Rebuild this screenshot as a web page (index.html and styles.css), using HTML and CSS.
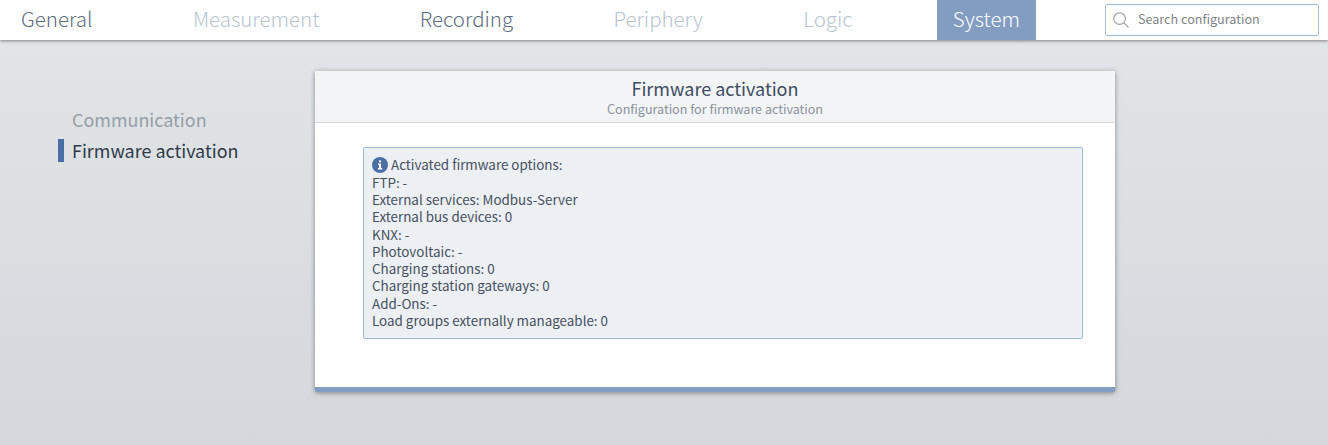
FILE: index.html
```html
<!DOCTYPE html>
<html lang="en">
<head>
    <meta charset="UTF-8">
    <meta name="viewport" content="width=device-width, initial-scale=1.0">
    <title>Firmware activation</title>
    <link rel="stylesheet" href="styles.css">
</head>
<body>
    <header class="topbar">
        <nav class="tabs">
            <a class="tab">General</a>
            <a class="tab tab-muted">Measurement</a>
            <a class="tab">Recording</a>
            <a class="tab tab-muted">Periphery</a>
            <a class="tab tab-muted">Logic</a>
            <a class="tab tab-active">System</a>
        </nav>
        <div class="search">
            <svg class="search-icon" width="16" height="16" viewBox="0 0 16 16" fill="none" stroke="#979ca3" stroke-width="1.1">
                <circle cx="6.6" cy="6.6" r="5.8"/>
                <path d="M10.8 10.8L15.6 15.6"/>
            </svg>
            <span class="search-text">Search configuration</span>
        </div>
    </header>
    <main class="page">
        <aside class="sidenav">
            <a class="sidenav-item">Communication</a>
            <a class="sidenav-item sidenav-active">Firmware activation</a>
        </aside>
        <section class="card">
            <div class="card-head">
                <h2>Firmware activation</h2>
                <p>Configuration for firmware activation</p>
            </div>
            <div class="card-body">
                <div class="notice">
                    <div class="notice-title">
                        <svg class="info-icon" width="16" height="16" viewBox="0 0 16 16">
                            <circle cx="8" cy="8" r="8" fill="#4b6fa5"/>
                            <rect x="7" y="3.4" width="2" height="1.9" fill="#fff"/>
                            <path d="M6 6.6H9V10.9H10.2V12.4H6V10.9H7V8.1H6Z" fill="#fff"/>
                        </svg>
                        Activated firmware options:
                    </div>
                    <div>FTP: -</div>
                    <div>External services: Modbus-Server</div>
                    <div>External bus devices: 0</div>
                    <div>KNX: -</div>
                    <div>Photovoltaic: -</div>
                    <div>Charging stations: 0</div>
                    <div>Charging station gateways: 0</div>
                    <div>Add-Ons: -</div>
                    <div>Load groups externally manageable: 0</div>
                </div>
            </div>
        </section>
    </main>
</body>
</html>
```

FILE: styles.css
```css
html, body {
    height: 100%;
}

body {
    margin: 0;
    height: 445px;
    overflow: hidden;
    font-family: "Noto Sans CJK SC", "Noto Sans", sans-serif;
    color: #3a4452;
    background: linear-gradient(180deg, #e3e6e8 0%, #d4d7db 100%);
}

.topbar {
    height: 40px;
    display: flex;
    justify-content: space-between;
    background-color: #fff;
    box-shadow: 0 1px 3px rgba(60, 60, 60, 0.6);
}

.tabs {
    display: flex;
    gap: 68.4px;
    padding-left: 5px;
}

.tab {
    padding: 0 16px;
    font-size: 20.5px;
    font-weight: 300;
    line-height: 37px;
    height: 40px;
    color: #5d6c80;
}

.tab-muted {
    color: #b8c3d1;
}

.tab-active {
    color: #fff;
    background-color: #839dc2;
}

.search {
    display: flex;
    align-items: center;
    box-sizing: border-box;
    width: 214px;
    height: 32px;
    margin: 4px 9px 0 0;
    padding-left: 7px;
    background-color: #fff;
    border: 1px solid #a9bad3;
    border-radius: 2px;
}

.search-text {
    margin-left: 9px;
    font-size: 12.6px;
    line-height: 26px;
    height: 28px;
    color: #7d8288;
}

.page {
    display: flex;
    padding: 31px 0 0 58px;
}

.sidenav {
    width: 257px;
    padding-top: 37px;
}

.sidenav-item {
    display: block;
    height: 23px;
    margin-bottom: 8px;
    padding-left: 14px;
    font-size: 17.95px;
    line-height: 23px;
    color: #959ea8;
}

.sidenav-active {
    padding-left: 8px;
    border-left: 6px solid #4b6fa5;
    color: #2f3b4a;
}

.card {
    width: 800px;
    height: 321px;
    box-sizing: border-box;
    background-color: #fff;
    border-bottom: 5px solid #839dc2;
    border-radius: 2px;
    box-shadow: 0 1px 5px rgba(60, 60, 60, 0.55);
}

.card-head {
    height: 52px;
    box-sizing: border-box;
    padding-top: 6px;
    text-align: center;
    background-color: #f3f4f6;
    border-bottom: 1px solid #d5d9de;
}

.card-head h2 {
    margin: 0;
    font-size: 18px;
    font-weight: 400;
    line-height: 23px;
    color: #3e4d61;
}

.card-head p {
    margin: 0;
    font-size: 12.55px;
    line-height: 17px;
    color: #8a929c;
}

.card-body {
    padding: 24px 32px 0 48px;
}

.notice {
    height: 192px;
    box-sizing: border-box;
    padding: 8.4px 8px 0;
    font-size: 13.4px;
    line-height: 17.3px;
    color: #465160;
    background-color: #eceff3;
    border: 1px solid #a3b8d6;
    border-radius: 2px;
}

.info-icon {
    vertical-align: -3px;
}
```
